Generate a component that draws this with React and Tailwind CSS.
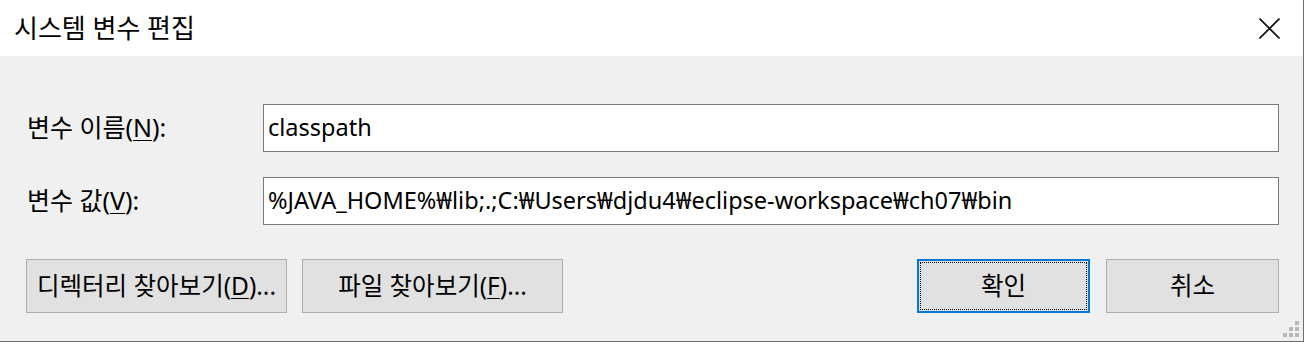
import React from "react";

const font = { fontFamily: '"Noto Sans", "Noto Sans CJK KR", sans-serif' };

const U = ({ children }) => <span className="underline underline-offset-[3px] decoration-1">{children}</span>;

function Field({ label, value }) {
  return (
    <div className="flex items-center">
      <div className="w-[237px] pl-[1px] text-[25px] text-black">{label}</div>
      <div className="flex-1 h-[48px] bg-white border border-[#7a7a7a] flex items-center pl-[4px] text-[23.5px] text-black whitespace-nowrap overflow-hidden">
        {value}
      </div>
    </div>
  );
}

function Btn({ children, primary, className = "" }) {
  return (
    <button
      className={
        "h-[54px] bg-[#e1e1e1] text-[24.5px] text-black flex items-center justify-center whitespace-nowrap " +
        (primary
          ? "border-2 border-[#0078d7] outline-1 outline-dotted outline-black outline-offset-[-4px] "
          : "border border-[#adadad] ") +
        className
      }
    >
      {children}
    </button>
  );
}

export default function App() {
  return (
    <div style={font} className="w-[1304px] h-[342px] flex flex-col border-r border-b border-[#6d6d6d] bg-[#f0f0f0]">
      <div className="h-[56px] bg-white flex items-center justify-between pl-[14px] pr-[23px]">
        <span className="text-[26px] text-black">시스템 변수 편집</span>
        <svg width="21" height="21" viewBox="0 0 21 21">
          <path d="M0.5 0.5 L20.5 20.5 M20.5 0.5 L0.5 20.5" stroke="#111" strokeWidth="1.6" />
        </svg>
      </div>
      <div className="relative flex-1 flex flex-col pt-[48px] pl-[26px] pr-[24px]">
        <div className="flex flex-col gap-[25px]">
          <Field label={<>변수 이름(<U>N</U>):</>} value="classpath" />
          <Field
            label={<>변수 값(<U>V</U>):</>}
            value="%JAVA_HOME%₩lib;.;C:₩Users₩djdu4₩eclipse-workspace₩ch07₩bin"
          />
        </div>
        <div className="flex items-center mt-[34px]">
          <Btn className="w-[261px]">디렉터리 찾아보기(<U>D</U>)...</Btn>
          <Btn className="w-[261px] ml-[15px]">파일 찾아보기(<U>F</U>)...</Btn>
          <div className="flex-1" />
          <Btn primary className="w-[173px]">확인</Btn>
          <Btn className="w-[173px] ml-[16px]">취소</Btn>
        </div>
        <svg className="absolute right-[4px] bottom-[4px]" width="16" height="16" viewBox="0 0 16 16">
          <rect x="12" y="0" width="4" height="4" fill="#b8b8b8" />
          <rect x="6" y="6" width="4" height="4" fill="#b8b8b8" />
          <rect x="12" y="6" width="4" height="4" fill="#b8b8b8" />
          <rect x="0" y="12" width="4" height="4" fill="#b8b8b8" />
          <rect x="6" y="12" width="4" height="4" fill="#b8b8b8" />
          <rect x="12" y="12" width="4" height="4" fill="#b8b8b8" />
        </svg>
      </div>
    </div>
  );
}
